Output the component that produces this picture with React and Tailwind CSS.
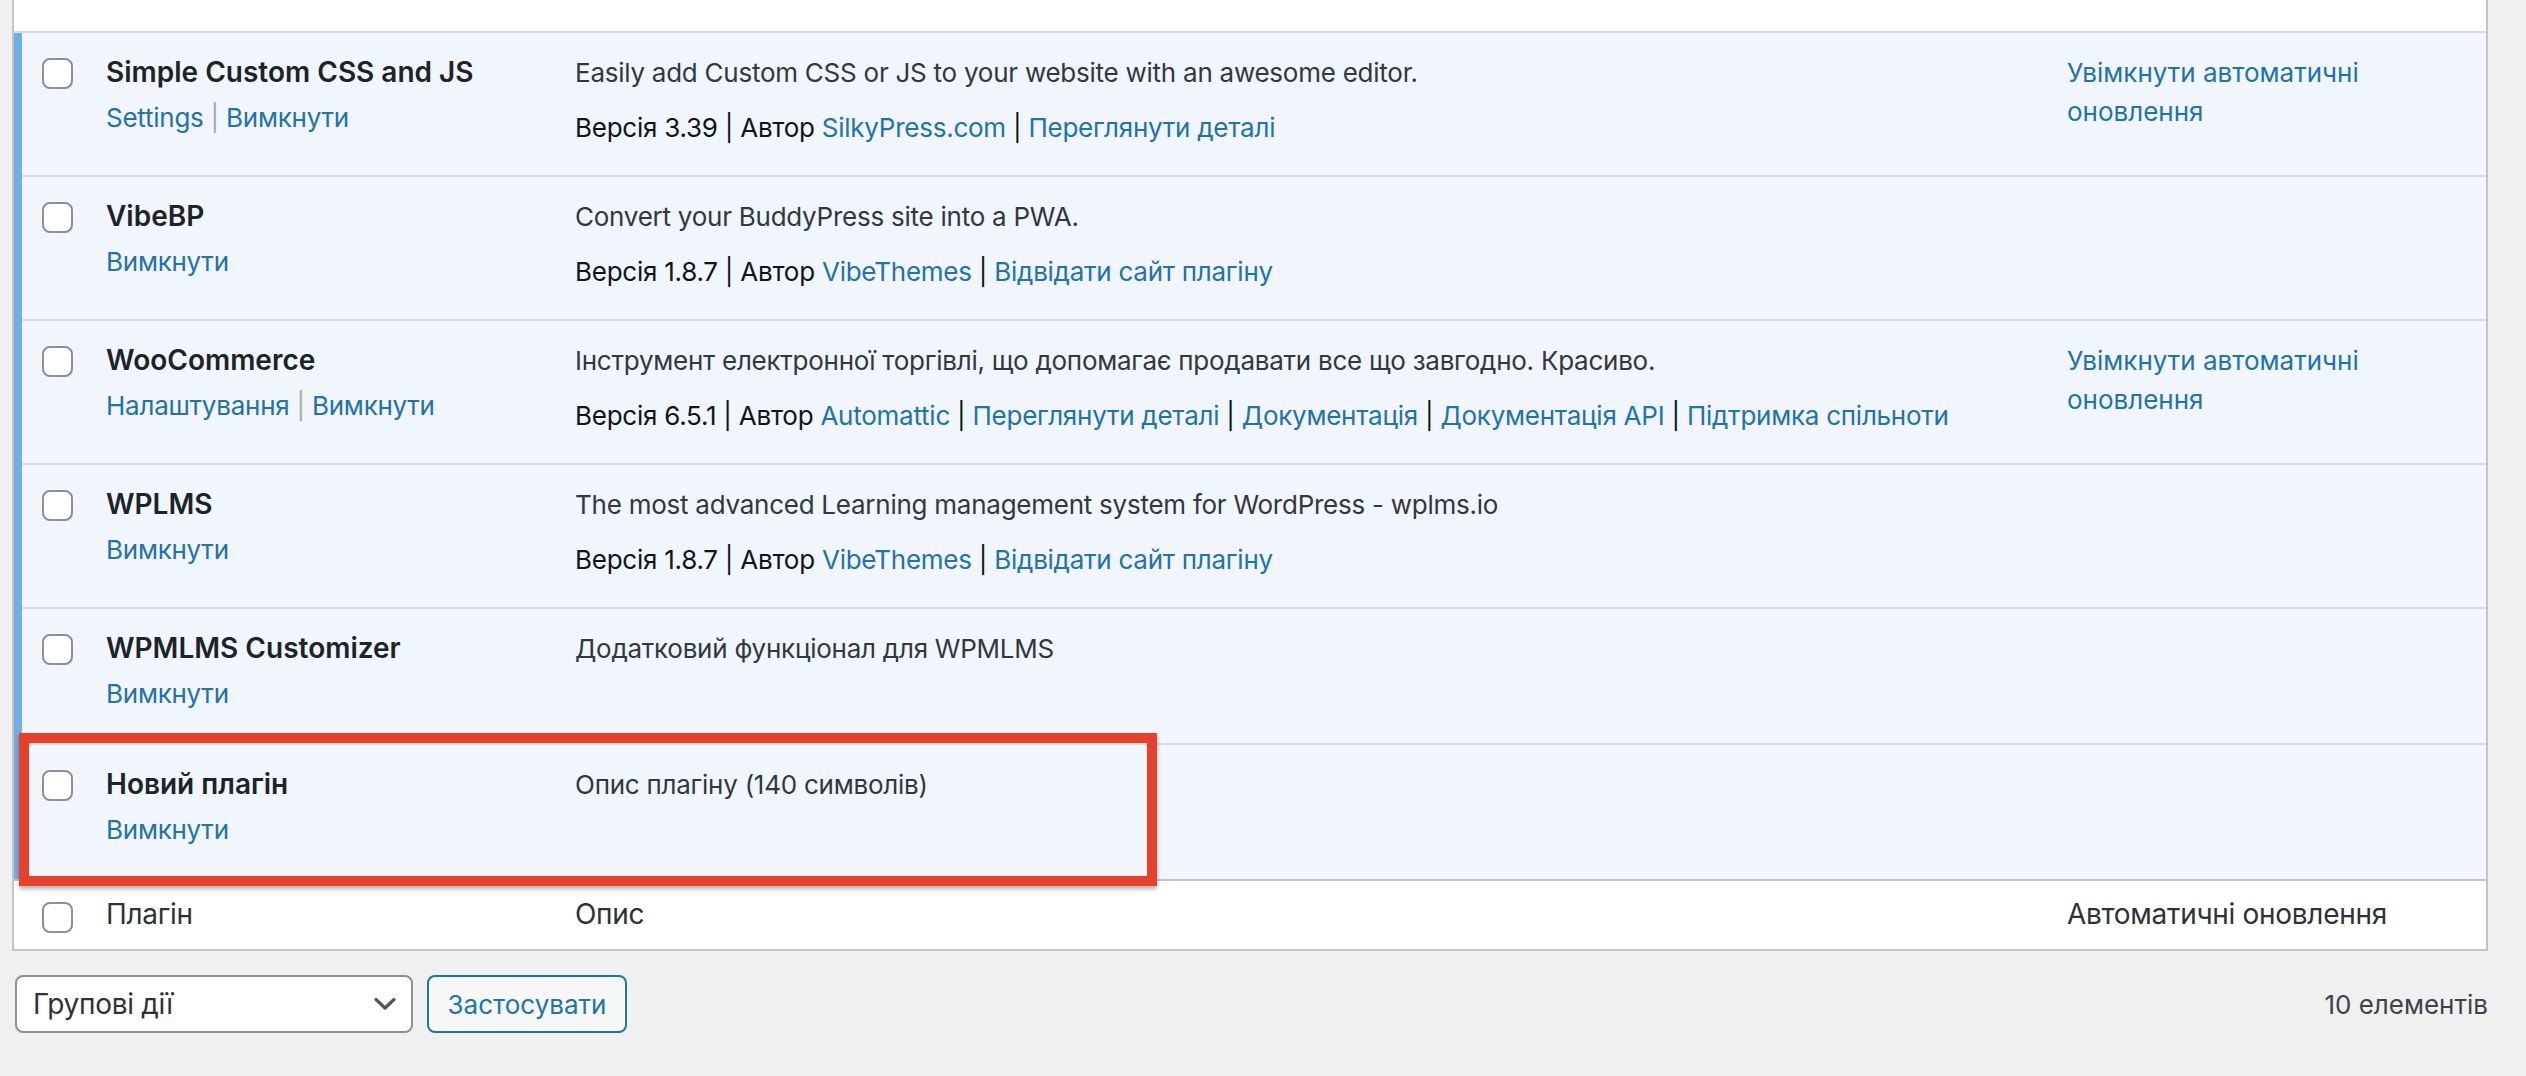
import React from 'react';

const PLUGINS = [
  {
    name: 'Simple Custom CSS and JS',
    actions: ['Settings', 'Вимкнути'],
    desc: 'Easily add Custom CSS or JS to your website with an awesome editor.',
    version: '3.39',
    author: 'SilkyPress.com',
    links: ['Переглянути деталі'],
    auto: true,
  },
  {
    name: 'VibeBP',
    actions: ['Вимкнути'],
    desc: 'Convert your BuddyPress site into a PWA.',
    version: '1.8.7',
    author: 'VibeThemes',
    links: ['Відвідати сайт плагіну'],
  },
  {
    name: 'WooCommerce',
    actions: ['Налаштування', 'Вимкнути'],
    desc: 'Інструмент електронної торгівлі, що допомагає продавати все що завгодно. Красиво.',
    version: '6.5.1',
    author: 'Automattic',
    links: ['Переглянути деталі', 'Документація', 'Документація API', 'Підтримка спільноти'],
    auto: true,
  },
  {
    name: 'WPLMS',
    actions: ['Вимкнути'],
    desc: 'The most advanced Learning management system for WordPress - wplms.io',
    version: '1.8.7',
    author: 'VibeThemes',
    links: ['Відвідати сайт плагіну'],
  },
  {
    name: 'WPMLMS Customizer',
    actions: ['Вимкнути'],
    desc: 'Додатковий функціонал для WPMLMS',
  },
  {
    name: 'Новий плагін',
    actions: ['Вимкнути'],
    desc: 'Опис плагіну (140 символів)',
    highlight: true,
  },
];

function Checkbox() {
  return <div className="w-[31px] h-[31px] rounded-lg border-2 border-[#8c8f94] bg-white" />;
}

function PluginRow({ plugin, first }) {
  return (
    <div className="relative flex">
      {/* active stripe */}
      <div className="w-[8px] shrink-0 bg-[#72aee6]" />
      <div className={`flex flex-1 pb-[28px] ${first ? '' : 'border-t-2 border-[#dcdcde]'}`}>
        <div className="w-[84px] shrink-0 pl-[20px] pt-[25px]">
          <Checkbox />
        </div>
        <div className="w-[469px] shrink-0 pt-[20px]">
          <div className="text-[28px] leading-[39px] font-semibold text-[#1d2327] mb-[6px]">{plugin.name}</div>
          <div className="text-[26px] leading-[39px] tracking-[-0.25px] pb-[2px] text-[#2271b1]">
            {plugin.actions.map((a, i) => (
              <span key={i}>
                {i > 0 && <span className="text-[#a7aaad]"> | </span>}
                {a}
              </span>
            ))}
          </div>
        </div>
        <div className="w-[1492px] shrink-0 pt-[20px] text-[26px] leading-[39px] tracking-[-0.25px]">
          <div className="text-[#32383d] mb-[16px]">{plugin.desc}</div>
          {plugin.version && (
            <div className="text-[#101517]">
              Версія {plugin.version} | Автор <span className="text-[#2271b1]">{plugin.author}</span>
              {plugin.links.map((l, i) => (
                <span key={i}>
                  {' | '}
                  <span className="text-[#2271b1]">{l}</span>
                </span>
              ))}
            </div>
          )}
        </div>
        <div className="flex-1 pt-[20px] text-[26px] leading-[39px] text-[#2271b1]">
          {plugin.auto && (
            <>
              Увімкнути автоматичні
              <br />
              оновлення
            </>
          )}
        </div>
      </div>

      {/* annotation box */}
      {plugin.highlight && (
        <div className="absolute left-[5px] top-[-10px] w-[1138px] h-[153px] border-[10px] border-[#e8412b] shadow-[0_3px_4px_rgba(0,0,0,0.3)]" />
      )}
    </div>
  );
}

export default function App() {
  return (
    <div className="w-[2526px] h-[1076px] overflow-hidden bg-[#f0f0f1] pl-[12px] pr-[38px] font-[family-name:Inter,'Noto_Sans',sans-serif]">
      {/* table */}
      <div className="border-x-2 border-b-2 border-[#c3c4c7] bg-white">
        {/* tail of previous (inactive) row */}
        <div className="h-[31px] bg-white" />

        <div className="border-t-2 border-[#dcdcde] bg-[#f0f6fc]">
          {PLUGINS.map((p, i) => (
            <PluginRow key={p.name} plugin={p} first={i === 0} />
          ))}
        </div>

        {/* footer */}
        <div className="flex h-[70px] border-t-2 border-[#c3c4c7] bg-white text-[28px] leading-[39px] tracking-[-0.3px] text-[#2c3338]">
          <div className="w-[92px] shrink-0 pl-[28px] pt-[21px]">
            <Checkbox />
          </div>
          <div className="w-[469px] shrink-0 pt-[14px]">Плагін</div>
          <div className="w-[1492px] shrink-0 pt-[14px]">Опис</div>
          <div className="flex-1 pt-[14px]">Автоматичні оновлення</div>
        </div>
      </div>

      {/* bulk actions */}
      <div className="flex items-center mt-[24px]">
        <div className="ml-[3px] w-[398px] h-[58px] flex items-center justify-between rounded-lg border-2 border-[#8c8f94] bg-white pl-[16px] pr-[15px] text-[28px] tracking-[-0.3px] text-[#2c3338]">
          <span>Групові дії</span>
          <svg width="22" height="14" viewBox="0 0 22 14" fill="none">
            <path d="M2 2.5 L11 11 L20 2.5" stroke="#50575e" strokeWidth="3.2" strokeLinecap="round" strokeLinejoin="round" />
          </svg>
        </div>
        <button className="ml-[14px] w-[200px] h-[58px] rounded-lg border-2 border-[#2271b1] bg-[#f6f7f7] text-[26px] text-[#2271b1]">
          Застосувати
        </button>
        <div className="flex-1" />
        <div className="text-[26px] leading-[39px] text-[#3c434a]">10 елементів</div>
      </div>
    </div>
  );
}
